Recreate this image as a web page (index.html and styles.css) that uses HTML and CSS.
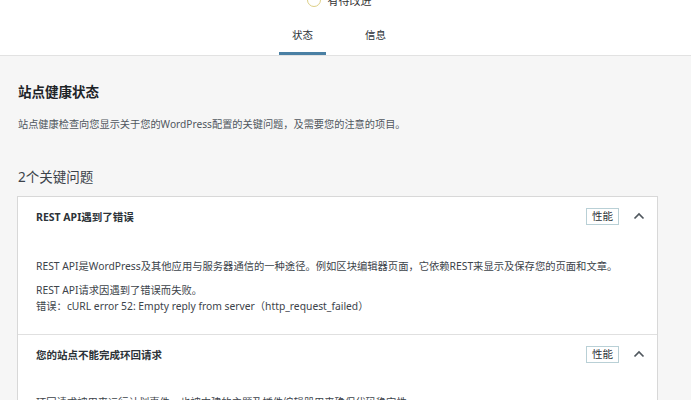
FILE: index.html
```html
<!DOCTYPE html>
<html lang="zh-CN">
<head>
<meta charset="utf-8">
<title>站点健康</title>
<link rel="stylesheet" href="styles.css">
</head>
<body>
<header class="top">
  <div class="score">
    <span class="ring"></span>
    <span class="score-text">有待改进</span>
  </div>
  <nav class="tabs">
    <a class="tab active">状态</a>
    <a class="tab">信息</a>
  </nav>
</header>
<main class="content">
  <h1 class="title">站点健康状态</h1>
  <p class="desc">站点健康检查向您显示关于您的WordPress配置的关键问题，及需要您的注意的项目。</p>
  <h2 class="count">2个关键问题</h2>
  <div class="accordion">
    <section class="item">
      <div class="item-head">
        <span class="item-title">REST API遇到了错误</span>
        <span class="badge">性能</span>
        <svg class="chev" width="12" height="8" viewBox="0 0 12 8"><polyline points="1.5,6.5 6,2 10.5,6.5" fill="none" stroke="#50575e" stroke-width="1.7"/></svg>
      </div>
      <div class="item-body">
        <p class="para">REST API是WordPress及其他应用与服务器通信的一种途径。例如区块编辑器页面，它依赖REST来显示及保存您的页面和文章。</p>
        <p class="para">REST API请求因遇到了错误而失败。<br>错误：cURL error 52: Empty reply from server（http_request_failed）</p>
      </div>
    </section>
    <section class="item">
      <div class="item-head">
        <span class="item-title">您的站点不能完成环回请求</span>
        <span class="badge">性能</span>
        <svg class="chev" width="12" height="8" viewBox="0 0 12 8"><polyline points="1.5,6.5 6,2 10.5,6.5" fill="none" stroke="#50575e" stroke-width="1.7"/></svg>
      </div>
      <div class="item-body second">
        <p class="para">环回请求被用来运行计划事件，也被内建的主题及插件编辑器用来确保代码稳定性。</p>
      </div>
    </section>
  </div>
</main>
</body>
</html>
```

FILE: styles.css
```css
* { box-sizing: border-box; }
html, body { margin: 0; padding: 0; }
body {
  background: #f6f6f6;
  font-family: "Noto Sans", "Noto Sans CJK SC", sans-serif;
  color: #1d2327;
  overflow: hidden;
  height: 400px;
}
.top {
  background: #fff;
  height: 56px;
  border-bottom: 1px solid #e2e2e2;
  display: flex;
  flex-direction: column;
  overflow: hidden;
}
.score {
  display: flex;
  align-items: center;
  justify-content: center;
  gap: 7px;
  height: 14px;
  margin-top: -7px;
  padding-right: 13px;
}
.ring {
  width: 14px;
  height: 14px;
  border: 1.5px solid #ddcf86;
  border-radius: 50%;
}
.score-text { font-size: 11px; color: #333; }
.tabs {
  margin-top: auto;
  display: flex;
  justify-content: center;
  gap: 26px;
  padding-right: 13px;
}
.tab {
  font-size: 10.5px;
  line-height: 22px;
  padding: 0 13px 6px;
  border-bottom: 3px solid transparent;
  color: #2c3338;
}
.tab.active { border-bottom-color: #4a80a4; }
.content {
  padding: 0 33px 0 17px;
}
.title {
  margin: 26px 0 0 1px;
  font-size: 13.5px;
  line-height: 20px;
  font-weight: 700;
}
.desc {
  margin: 14px 0 0 1px;
  font-size: 10.2px;
  line-height: 16px;
  color: #50575e;
}
.count {
  margin: 35px 0 0 1px;
  font-size: 13.5px;
  line-height: 20px;
  font-weight: 400;
  color: #3c434a;
}
.accordion {
  margin-top: 9px;
  background: #fff;
  border: 1px solid #d8d8d8;
}
.item + .item { border-top: 1px solid #e0e0e0; }
.item-head {
  display: flex;
  align-items: center;
  height: 40px;
  padding: 0 12px 2px 18px;
}
.item-title {
  font-size: 10.5px;
  font-weight: 700;
  color: #2c3338;
  flex: 1;
}
.badge {
  font-size: 10.5px;
  line-height: 15px;
  padding: 0 5px;
  border: 1px solid #b9d0d6;
  color: #2c3338;
}
.chev { margin-left: 14px; }
.item-body {
  padding: 21px 18px 20px;
}
.item-body.second { padding-top: 19px; }
.para {
  margin: 0;
  font-size: 10.3px;
  line-height: 16px;
  color: #3c434a;
}
.para + .para { margin-top: 8px; }
```
